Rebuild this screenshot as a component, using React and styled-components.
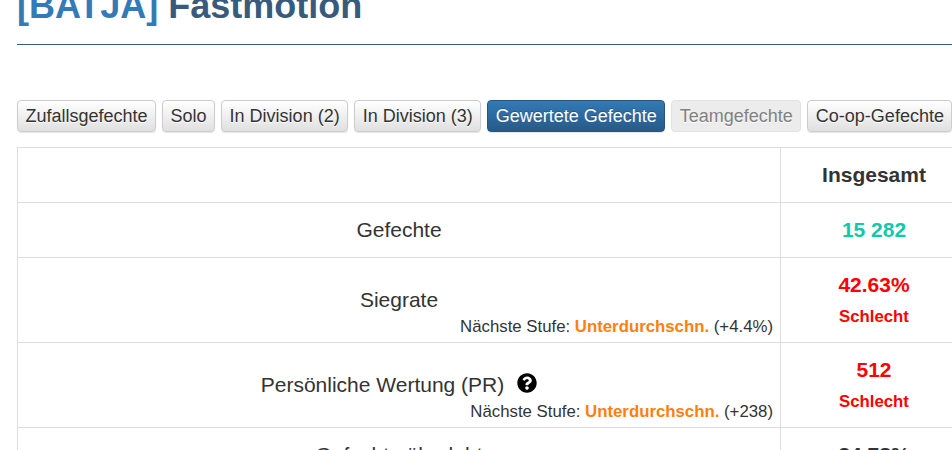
import React from "react";
import styled, { createGlobalStyle } from "styled-components";
import { FaQuestionCircle } from "react-icons/fa";

const Global = createGlobalStyle`
  html, body {
    margin: 0;
    height: 450px;
    overflow: hidden;
    background: #fff;
  }
  body {
    font-family: "Liberation Sans", Arial, sans-serif;
    color: #333;
    font-size: 14px;
  }
`;

const Page = styled.div`
  width: 1100px;
  margin-top: -18px;
  padding-left: 17px;
`;

const Header = styled.div`
  border-bottom: 1px solid #34607f;
  height: 61px;
  padding-top: 1px;
  margin-bottom: 55px;
`;

const Title = styled.h1`
  margin: 0;
  font-size: 36px;
  line-height: 46px;
  font-weight: 700;
  color: #385b7c;
`;

const Clan = styled.span`
  color: #337ab7;
`;

const Tabs = styled.div`
  display: flex;
  gap: 6px;
  margin-bottom: 15px;
`;

const Tab = styled.button`
  height: 32px;
  padding: 0 7.5px;
  font: 400 18px "Liberation Sans", Arial, sans-serif;
  border-radius: 4px;
  border: 1px solid ${p => (p.$active ? "#245580" : p.$disabled ? "#e2e2e2" : "#ccc")};
  color: ${p => (p.$active ? "#fff" : p.$disabled ? "#808080" : "#333")};
  background: ${p =>
    p.$active
      ? "linear-gradient(to bottom, #337ab7, #265a88)"
      : p.$disabled
      ? "#ececec"
      : "linear-gradient(to bottom, #fff, #e0e0e0)"};
  box-shadow: ${p => (p.$disabled ? "none" : "0 1px 1px rgba(0,0,0,.1)")};
  text-shadow: ${p => (p.$active ? "0 -1px 0 rgba(0,0,0,.2)" : "0 1px 0 #fff")};
`;

const Table = styled.table`
  border-collapse: collapse;
  table-layout: fixed;
  width: 1050px;
  font-size: 21px;
`;

const Row = styled.tr`
  height: ${p => p.$h}px;
`;

const Cell = styled.td`
  border: 1px solid #ddd;
  padding: 0;
  text-align: center;
  vertical-align: middle;
`;

const HeadCell = styled(Cell)`
  width: 186px;
  font-weight: 700;
`;

const LabelCell = styled(Cell)`
  width: 762px;
`;

const TallLabelCell = styled(LabelCell)`
  vertical-align: top;
  padding-top: 30px;
`;

const Label = styled.div`
  line-height: 24px;
`;

const Help = styled(FaQuestionCircle)`
  width: 20px;
  height: 20px;
  margin-left: 13px;
  vertical-align: -1px;
  color: #000;
`;

const Next = styled.div`
  margin-top: 5px;
  font-size: 16.8px;
  line-height: 20px;
  text-align: right;
  padding-right: 7px;
`;

const Tier = styled.b`
  color: #ff7f0e;
`;

const Value = styled.div`
  font-weight: 700;
  color: ${p => p.$color || "#333"};
  line-height: 24px;
`;

const Rating = styled.div`
  margin-top: 10px;
  font-size: 16.8px;
  font-weight: 700;
  line-height: 20px;
  color: #f00;
`;

const tabs = [
  { name: "Zufallsgefechte" },
  { name: "Solo" },
  { name: "In Division (2)" },
  { name: "In Division (3)" },
  { name: "Gewertete Gefechte", active: true },
  { name: "Teamgefechte", disabled: true },
  { name: "Co-op-Gefechte" },
];

export default function App() {
  return (
    <>
      <Global />
      <Page>
        <Header>
          <Title>
            <Clan>[BATJA]</Clan> Fastmotion
          </Title>
        </Header>
        <Tabs>
          {tabs.map(t => (
            <Tab key={t.name} $active={t.active} $disabled={t.disabled}>
              {t.name}
            </Tab>
          ))}
        </Tabs>
        <Table>
          <tbody>
            <Row $h={55}>
              <LabelCell />
              <HeadCell>Insgesamt</HeadCell>
              <Cell />
            </Row>
            <Row $h={55}>
              <LabelCell>
                <Label>Gefechte</Label>
              </LabelCell>
              <Cell>
                <Value $color="#0fc9a8">15 282</Value>
              </Cell>
              <Cell />
            </Row>
            <Row $h={85}>
              <TallLabelCell>
                <Label>Siegrate</Label>
                <Next>
                  Nächste Stufe: <Tier>Unterdurchschn.</Tier> (+4.4%)
                </Next>
              </TallLabelCell>
              <Cell>
                <Value $color="#f00">42.63%</Value>
                <Rating>Schlecht</Rating>
              </Cell>
              <Cell />
            </Row>
            <Row $h={85}>
              <TallLabelCell>
                <Label>
                  Persönliche Wertung (PR)
                  <Help />
                </Label>
                <Next>
                  Nächste Stufe: <Tier>Unterdurchschn.</Tier> (+238)
                </Next>
              </TallLabelCell>
              <Cell>
                <Value $color="#f00">512</Value>
                <Rating>Schlecht</Rating>
              </Cell>
              <Cell />
            </Row>
            <Row $h={55}>
              <LabelCell>
                <Label>Gefechte überlebt</Label>
              </LabelCell>
              <Cell>
                <Value>34.78%</Value>
              </Cell>
              <Cell />
            </Row>
          </tbody>
        </Table>
      </Page>
    </>
  );
}
